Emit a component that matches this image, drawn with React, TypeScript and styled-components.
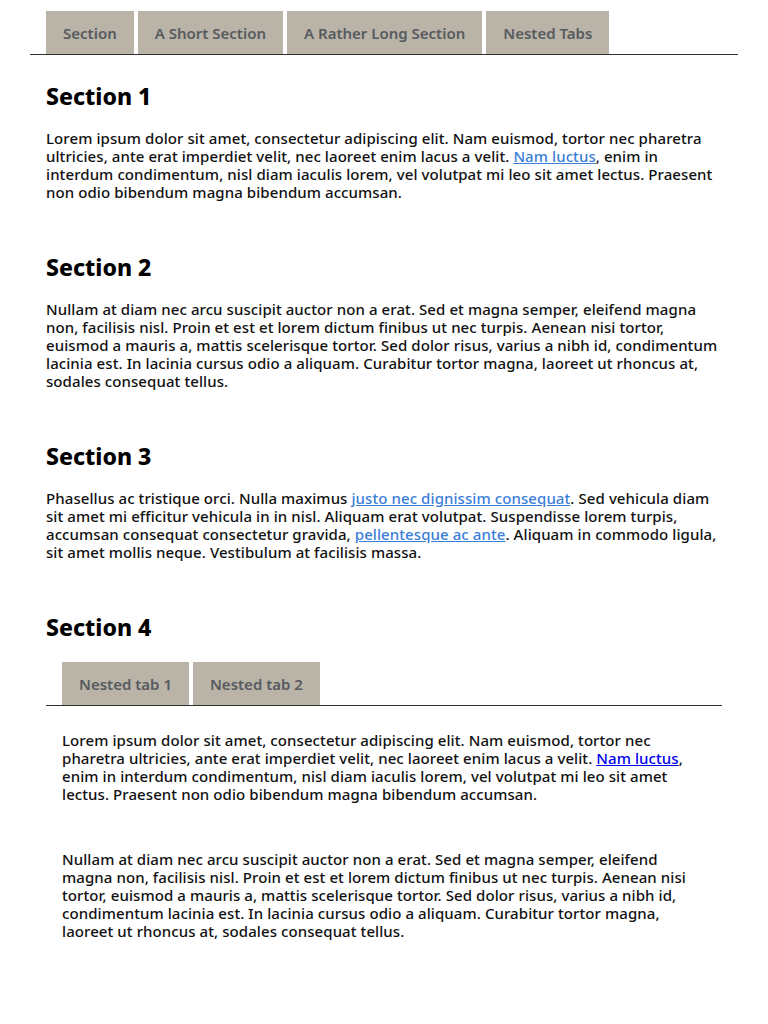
import styled, { createGlobalStyle } from "styled-components";

const GlobalStyle = createGlobalStyle`
  body {
    margin: 0;
    background: #ffffff;
    color: #111111;
    font-family: "Noto Sans", "Liberation Sans", sans-serif;
  }
`;

const Page = styled.div`
  padding: 11px 30px 40px 30px;
`;

const TabList = styled.div`
  display: flex;
  gap: 4px;
  padding-left: 16px;
  border-bottom: 1px solid #2e2e2a;
`;

const Tab = styled.div`
  height: 43px;
  padding: 0 17px;
  display: flex;
  align-items: center;
  background-color: #b9b3a8;
  color: #575b5e;
  font-size: 15px;
  font-weight: 600;
  white-space: nowrap;
`;

const Panel = styled.div`
  padding: 0 16px;
`;

const Heading = styled.h2<{ $first?: boolean }>`
  margin: ${({ $first }) => ($first ? "26px" : "51px")} 0 0 0;
  font-size: 23px;
  line-height: 30px;
  font-weight: 800;
  color: #000000;
`;

const Text = styled.p<{ $gap?: number }>`
  margin: ${({ $gap }) => $gap ?? 18}px 0 0 0;
  font-size: 15px;
  line-height: 18px;
  font-weight: 500;
  letter-spacing: 0.08px;
  color: #111111;
`;

const Link = styled.a<{ $visited?: boolean }>`
  color: ${({ $visited }) => ($visited ? "#0000ee" : "#3b7ed8")};
  text-decoration: underline;
`;

const NestedBlock = styled.div`
  margin-top: 20px;
`;

const NestedPanel = styled.div`
  padding: 0 16px;
`;

export default function App() {
  return (
    <Page>
      <GlobalStyle />
      <TabList>
        <Tab>Section</Tab>
        <Tab>A Short Section</Tab>
        <Tab>A Rather Long Section</Tab>
        <Tab>Nested Tabs</Tab>
      </TabList>
      <Panel>
        <Heading $first>Section 1</Heading>
        <Text>
          Lorem ipsum dolor sit amet, consectetur adipiscing elit. Nam euismod, tortor nec pharetra
          ultricies, ante erat imperdiet velit, nec laoreet enim lacus a velit.{" "}
          <Link href="#">Nam luctus</Link>, enim in interdum condimentum, nisl diam iaculis lorem,
          vel volutpat mi leo sit amet lectus. Praesent non odio bibendum magna bibendum accumsan.
        </Text>

        <Heading>Section 2</Heading>
        <Text>
          Nullam at diam nec arcu suscipit auctor non a erat. Sed et magna semper, eleifend magna
          non, facilisis nisl. Proin et est et lorem dictum finibus ut nec turpis. Aenean nisi
          tortor, euismod a mauris a, mattis scelerisque tortor. Sed dolor risus, varius a nibh id,
          condimentum lacinia est. In lacinia cursus odio a aliquam. Curabitur tortor magna, laoreet
          ut rhoncus at, sodales consequat tellus.
        </Text>

        <Heading>Section 3</Heading>
        <Text>
          Phasellus ac tristique orci. Nulla maximus{" "}
          <Link href="#">justo nec dignissim consequat</Link>. Sed vehicula diam sit amet mi
          efficitur vehicula in in nisl. Aliquam erat volutpat. Suspendisse lorem turpis, accumsan
          consequat consectetur gravida, <Link href="#">pellentesque ac ante</Link>. Aliquam in
          commodo ligula, sit amet mollis neque. Vestibulum at facilisis massa.
        </Text>

        <Heading>Section 4</Heading>
        <NestedBlock>
          <TabList>
            <Tab>Nested tab 1</Tab>
            <Tab>Nested tab 2</Tab>
          </TabList>
          <NestedPanel>
            <Text $gap={25}>
              Lorem ipsum dolor sit amet, consectetur adipiscing elit. Nam euismod, tortor nec
              pharetra ultricies, ante erat imperdiet velit, nec laoreet enim lacus a velit.{" "}
              <Link href="#" $visited>
                Nam luctus
              </Link>
              , enim in interdum condimentum, nisl diam iaculis lorem, vel volutpat mi leo sit amet
              lectus. Praesent non odio bibendum magna bibendum accumsan.
            </Text>
            <Text $gap={47}>
              Nullam at diam nec arcu suscipit auctor non a erat. Sed et magna semper, eleifend
              magna non, facilisis nisl. Proin et est et lorem dictum finibus ut nec turpis. Aenean
              nisi tortor, euismod a mauris a, mattis scelerisque tortor. Sed dolor risus, varius a
              nibh id, condimentum lacinia est. In lacinia cursus odio a aliquam. Curabitur tortor
              magna, laoreet ut rhoncus at, sodales consequat tellus.
            </Text>
          </NestedPanel>
        </NestedBlock>
      </Panel>
    </Page>
  );
}
